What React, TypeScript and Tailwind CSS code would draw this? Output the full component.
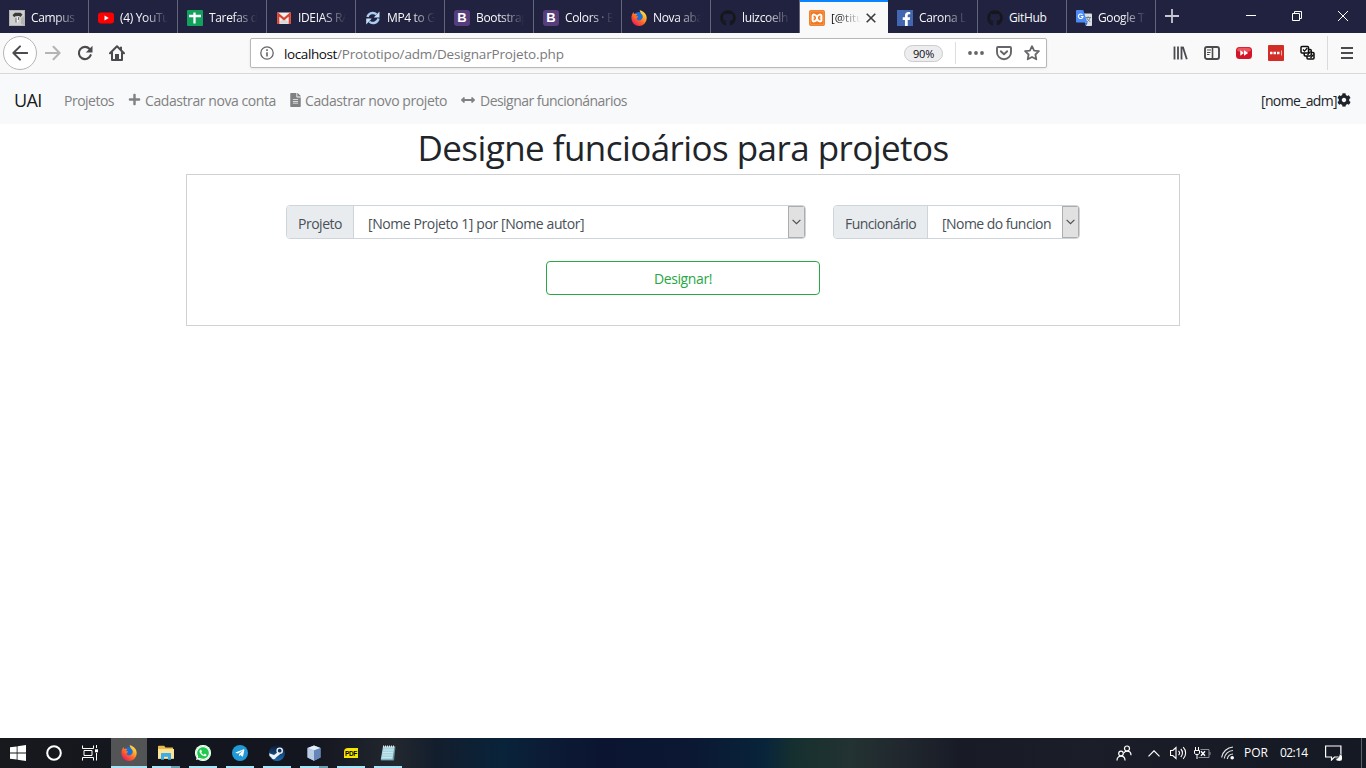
import React from "react";
import { FaPlus, FaFileAlt, FaArrowsAltH, FaCog, FaGithub, FaFacebookF, FaWhatsapp, FaTelegramPlane } from "react-icons/fa";

type Box = { className?: string };

const Firefox = ({ className = "" }: Box) => (
  <svg viewBox="0 0 16 16" className={className}>
    <defs>
      <linearGradient id="ffBody" x1="1" y1="0" x2="0.2" y2="1">
        <stop offset="0" stopColor="#fff36b" />
        <stop offset="0.3" stopColor="#ffbd2f" />
        <stop offset="0.6" stopColor="#ff6a2a" />
        <stop offset="1" stopColor="#e8175d" />
      </linearGradient>
    </defs>
    <circle cx="8" cy="8.2" r="6.2" fill="#1a6fd6" />
    <path d="M8.6.3c3.900.6 7.100 3.800 7.100 7.900A7.600 7.600 0 0 1 8 15.900 7.600 7.600 0 0 1 .4 8.200C.4 5.400 1.300 3.400 2.600 1.900c0 .9.2 1.500.6 2 1-.4 2.200-.3 3.200.4-.9.4-1.300 1-1.200 1.700l1.700.4c.5.2.2.8-.4 1.200-.7.4-.9 1-.6 1.700.6 1.200 2.400 1.400 3.800.6 1.800-1 2.400-2.700 1.800-4.300C11 4 9 3.300 8.600.3z" fill="url(#ffBody)" />
    <path d="M2.600 4.600c.6 0 1.700.4 2.500 1.400l1.700.4-1.300 1.200-.8 1.500C3.300 8.500 2.500 6.600 2.600 4.600z" fill="#ff6b21" />
  </svg>
);

const Campus = () => (
  <svg viewBox="0 0 16 16" className="size-4">
    <rect width="16" height="16" fill="#b4b4b4" />
    <path d="M1 1h14v5l-3 2v6l3 1H1z" fill="#cfcfcf" />
    <path d="M3.500 5 6 2.800h5.500l2 1.700-2 2.500-1.500-1-5 1z" fill="#3a3a3a" />
    <path d="M6 6.500h4.500l-.8 4.500L8.500 13 7 10.500z" fill="#f1f1f1" />
    <path d="M7 7.500v5M9.800 7l-.5 3" stroke="#555" strokeWidth=".9" />
  </svg>
);

const YouTube = () => (
  <svg viewBox="0 0 16 16" className="size-4">
    <rect y="2.500" width="16" height="11" rx="3" fill="#f00" />
    <path d="M6.500 5.500v5L10.800 8z" fill="#fff" />
  </svg>
);

const Sheets = () => (
  <svg viewBox="0 0 16 16" className="size-4">
    <rect width="16" height="16" rx="1" fill="#12a15d" />
    <path d="M2 6h12M7.500 2.500v11" stroke="#fff" strokeWidth="2.300" />
  </svg>
);

const Gmail = () => (
  <svg viewBox="0 0 16 16" className="size-4">
    <rect x="1" y="2.500" width="14" height="11.500" rx="1" fill="#eee" />
    <path d="M2 13.800 7 8.500h2l5 5.300z" fill="#d9d9d9" />
    <path d="M2.200 14V4.200L8 9l5.800-4.800V14" fill="none" stroke="#d8402f" strokeWidth="2.200" />
  </svg>
);

const Convert = () => (
  <svg viewBox="0 0 16 16" className="size-4">
    <path d="M2.500 7a5.500 5.500 0 0 1 9-2.600M13.500 8.500a5.500 5.500 0 0 1-9.200 3" fill="none" stroke="#a9cdf0" strokeWidth="2.400" />
    <path d="M14.500 1.500v6H8.700zM1.200 14.500v-6h5.600z" fill="#c5e0f8" />
  </svg>
);

const Bootstrap = () => (
  <span className="flex size-4 items-center justify-center rounded-[3px] bg-[#563d7c] font-['Liberation_Sans',sans-serif] text-[13px] leading-none font-bold text-white">B</span>
);

const Xampp = () => (
  <svg viewBox="0 0 16 16" className="size-4">
    <rect width="16" height="16" rx="2" fill="#f07a24" />
    <rect x="1.200" y="1.200" width="13.600" height="13.600" rx="1.800" fill="none" stroke="#f6a066" strokeWidth=".7" />
    <path d="M8 7C6.700 4.300 3.600 3.700 3.600 6v4c0 2.300 3.100 1.700 4.400-1 1.300 2.700 4.400 3.300 4.400 1V6C12.400 3.700 9.300 4.300 8 7zM8 6.500v3" fill="none" stroke="#fff" strokeWidth="2" />
    <path d="M3.600 8h1.800M12.400 8h-1.800" stroke="#fff" strokeWidth="1.200" />
  </svg>
);

const Facebook = () => (
  <span className="flex size-4 items-end justify-end bg-[#4267b2] pr-[2px]">
    <FaFacebookF className="h-[14px] w-[9px] text-white" />
  </span>
);

const Translate = () => (
  <svg viewBox="0 0 16 16" className="size-4">
    <path d="M6 3.500h9.200c.5 0 .8.3.8.8v10.900c0 .5-.3.800-.8.800H10z" fill="#dcdfe3" />
    <path d="M9.500 7.500h5.500M12.200 6.300v1.200M14 7.800c-.6 2-2 3.500-3.500 4.300M10.800 8c.8 1.800 2 3 3.500 3.700" stroke="#617b84" strokeWidth=".9" fill="none" />
    <path d="M10 16 8.700 12.500h3z" fill="#3367d6" />
    <path d="M.8 0h6.400l4.200 12.600H.8c-.5 0-.8-.3-.8-.8V.8C0 .3.300 0 .8 0z" fill="#4c8bf5" />
    <path d="M6.500 4.800A2.300 2.300 0 1 0 7 6.500H4.900" stroke="#fff" strokeWidth="1.100" fill="none" />
  </svg>
);

const tabs = [
  { icon: <Campus />, title: "Campus", w: "w-[89px]" },
  { icon: <YouTube />, title: "(4) YouTu", w: "w-[89px]" },
  { icon: <Sheets />, title: "Tarefas d", w: "w-[89px]" },
  { icon: <Gmail />, title: "IDEIAS RA", w: "w-[89px]" },
  { icon: <Convert />, title: "MP4 to G", w: "w-[89px]" },
  { icon: <Bootstrap />, title: "Bootstrap", w: "w-[89px]" },
  { icon: <Bootstrap />, title: "Colors · B", w: "w-[88px]" },
  { icon: <Firefox className="size-4" />, title: "Nova aba", w: "w-[89px]" },
  { icon: <FaGithub className="size-4 text-[#15171c]" />, title: "luizcoelh", w: "w-[89px]" },
  { icon: <Xampp />, title: "[@titu", w: "w-[88px]", active: true },
  { icon: <Facebook />, title: "Carona L", w: "w-[90px]" },
  { icon: <FaGithub className="size-4 text-[#15171c]" />, title: "GitHub", w: "w-[89px]" },
  { icon: <Translate />, title: "Google T", w: "w-[89px]" },
];

function TabStrip() {
  return (
    <div className="flex h-[33px] bg-[#20223f]">
      {tabs.map((t, i) =>
        t.active ? (
          <div key={i} className={`${t.w} flex shrink-0 items-center border-t-2 border-[#0a84ff] bg-[#f9f9fa] pl-[9px] text-[#0c0c0d]`}>
            {t.icon}
            <span className="ml-[6px] w-[30px] overflow-hidden [mask-image:linear-gradient(to_right,black_20%,transparent)] text-[11.5px] leading-4 whitespace-nowrap">{t.title}</span>
            <svg viewBox="0 0 10 10" className="ml-[5px] size-[10px]"><path d="M.7.700l8.600 8.600M9.300.7.700 9.300" stroke="#3c3c3e" strokeWidth="1.600" /></svg>
          </div>
        ) : (
          <div key={i} className={`${t.w} flex shrink-0 items-center border-r border-[#64657a] pt-[2px] pl-[9px] text-[#f9f9fa]`}>
            {t.icon}
            <span className={`ml-[6px] w-[48px] overflow-hidden text-[12px] leading-4 tracking-[-0.35px] whitespace-nowrap ${t.title === "GitHub" ? "" : "[mask-image:linear-gradient(to_right,black_50%,transparent)]"}`}>{t.title}</span>
          </div>
        ),
      )}
      <svg viewBox="0 0 14 14" className="mt-[9px] ml-[9px] size-[14px]"><path d="M7 0v14M0 7h14" stroke="#c8c8d0" strokeWidth="1.800" /></svg>
      <div className="ml-auto flex items-start pt-[11px] pr-[18px] text-white">
        <svg viewBox="0 0 10 10" className="mr-[36px] size-[10px]"><path d="M0 4.500h10" stroke="currentColor" /></svg>
        <svg viewBox="0 0 10 10" className="mr-[36px] size-[10px]"><path d="M.5 2.500h7v7h-7zM2.500 2.500v-2h7v7h-2" stroke="currentColor" fill="none" /></svg>
        <svg viewBox="0 0 10 10" className="size-[10px]"><path d="M0 0l10 10M10 0 0 10" stroke="currentColor" /></svg>
      </div>
    </div>
  );
}

function Toolbar() {
  return (
    <div className="flex h-[41px] items-center border-b border-[#d8d8da] bg-[#f9f9fa] pl-[3px] text-[#4a4a4f]">
      <div className="flex size-[34px] items-center justify-center rounded-full border border-[#b5b5b7] bg-white">
        <svg viewBox="0 0 16 16" className="size-4"><path d="M15.200 8H1.500M8 1.400 1.400 8 8 14.600" fill="none" stroke="currentColor" strokeWidth="2" strokeLinecap="round" strokeLinejoin="round" /></svg>
      </div>
      <svg viewBox="0 0 16 16" className="ml-[8px] size-4 text-[#b4b4b6]"><path d="M.8 8h13.700M8.500 1.800 14.600 8l-6.100 6.200" fill="none" stroke="currentColor" strokeWidth="2" strokeLinecap="round" strokeLinejoin="round" /></svg>
      <svg viewBox="0 0 16 16" className="ml-[16px] size-4"><path d="M13.700 10.200A6.100 6.100 0 1 1 12.600 4" fill="none" stroke="currentColor" strokeWidth="2.100" strokeLinecap="round" /><path d="M15.500.8v6.700H8.800z" fill="currentColor" /></svg>
      <svg viewBox="0 0 16 16" className="ml-[16px] size-4"><path d="M1 8.300 8 1.300l7 7M3 7.500V15h10V7.500M12 2.500v3" fill="none" stroke="currentColor" strokeWidth="2" strokeLinecap="round" strokeLinejoin="round" /><path d="M6 15V9h4v6z" fill="currentColor" /></svg>
      <div className="ml-[125px] flex h-[30px] w-[797px] items-center rounded-[2px] border border-[#b8b8ba] bg-white pl-[9px] shadow-[0_1px_3px_rgba(0,0,0,0.08)]">
        <svg viewBox="0 0 14 14" className="size-[14px]"><circle cx="7" cy="7" r="6.200" fill="none" stroke="#66666a" strokeWidth="1.300" /><path d="M7 6.200v4.300M7 3.300v1.700" stroke="#66666a" strokeWidth="1.600" /></svg>
        <span className="ml-[10px] pt-[2px] text-[13.5px] leading-5 whitespace-pre text-[#7a7a7c]"><span className="tracking-[-0.4px] text-[#0c0c0d]">localhost</span><span className="tracking-[-0.16px]">/Prototipo/adm/DesignarProjeto.php</span></span>
        <span className="ml-auto flex h-[17px] w-[39px] items-center justify-center rounded-full border border-[#ccccce] bg-[#ededf0] pt-px text-[11px] leading-none tracking-[-0.2px] text-[#0c0c0d]">90%</span>
        <span className="ml-[12px] h-[22px] w-px bg-[#dedee0]" />
        <svg viewBox="0 0 16 4" className="ml-[12px] h-1 w-4 text-[#66666a]"><circle cx="2" cy="2" r="1.900" fill="currentColor" /><circle cx="8" cy="2" r="1.900" fill="currentColor" /><circle cx="14" cy="2" r="1.900" fill="currentColor" /></svg>
        <svg viewBox="0 0 16 16" className="ml-[12px] size-4 text-[#66666a]"><path d="M2 2h12c.6 0 1 .4 1 1v4.200a7 7 0 0 1-14 0V3c0-.6.4-1 1-1zM4.800 6.300 8 9.300l3.200-3" fill="none" stroke="currentColor" strokeWidth="1.900" strokeLinecap="round" strokeLinejoin="round" /></svg>
        <svg viewBox="0 0 16 16" className="mr-[6px] ml-[12px] size-4 text-[#66666a]"><path d="m8 1.200 2.100 4.400 4.800.6-3.500 3.300.9 4.800L8 12l-4.300 2.300.9-4.800L1.100 6.200l4.800-.6z" fill="none" stroke="currentColor" strokeWidth="1.800" strokeLinejoin="round" /></svg>
      </div>
      <svg viewBox="0 0 16 16" className="ml-[125px] size-4"><path d="M3 1.500v13M6.500 1.500v13M10 1.500v13M11.300 1.800l4 12.400" transform="translate(-.5 0)" stroke="currentColor" strokeWidth="1.800" /></svg>
      <svg viewBox="0 0 16 16" className="ml-[16px] size-4"><rect x="1" y="2" width="14" height="12" rx="2" fill="none" stroke="currentColor" strokeWidth="1.900" /><path d="M8.500 2v12" stroke="currentColor" strokeWidth="1.600" /><path d="M3 5h4M3 7.500h3.500M3 9.500h2.500" stroke="currentColor" /></svg>
      <svg viewBox="0 0 16 16" className="ml-[16px] size-4"><rect y="2" width="16" height="12" rx="3.500" fill="#d3152a" /><path d="M1 5.500C1 3.500 2.500 2.700 4 2.700h8c1.500 0 3 .8 3 2.800-3 2-11 2-14 0z" fill="#ec5560" /><path d="M4.300 5.300v5.400L8 8v2.700L12.200 8 8 5.300V8z" fill="#fff" /></svg>
      <svg viewBox="0 0 16 16" className="ml-[16px] size-4"><rect width="16" height="16" rx="1" fill="#d32d27" /><path d="M2 8h2.500M5.500 8H8M9 8h2.500" stroke="#fff" strokeWidth="2.300" /><path d="M13.500 5.500v5" stroke="#f3b0ad" /></svg>
      <svg viewBox="0 0 16 16" className="ml-[16px] size-4 text-[#0c0c0d]"><g fill="#fff" stroke="currentColor" strokeWidth="1.500"><rect x="7" y="7.500" width="7" height="6.500" rx="1" /><rect x="4.200" y="4.500" width="7" height="6.500" rx="1" /><rect x="1" y="1.500" width="7.500" height="6.500" rx="1" /></g><path d="m3 4.500 1.500 1.700L7.300 3M7.500 10l3-3.500M10.500 13l3-3.500" fill="none" stroke="currentColor" strokeWidth="1.200" /></svg>
      <span className="ml-[11px] h-[34px] w-px bg-[#dadadc]" />
      <svg viewBox="0 0 12 12" className="ml-[13px] size-[12px]"><path d="M0 1h12M0 6h12M0 11h12" stroke="currentColor" strokeWidth="2" /></svg>
    </div>
  );
}

function NavBar() {
  return (
    <nav className="flex h-[50px] items-center bg-[#f8f9fa] pt-[3px] pr-[15px] pl-[14px] text-[14px] text-[#808182]">
      <span className="w-[50px] text-[18px] tracking-[-0.6px] text-[#191a1b]">UAI</span>
      <span className="w-[64px] tracking-[-0.5px]">Projetos</span>
      <FaPlus className="mr-[4px] size-[13px] -translate-y-px" />
      <span className="w-[145px] tracking-[-0.42px] whitespace-nowrap">Cadastrar nova conta</span>
      <FaFileAlt className="mr-[4px] h-[14px] w-[11px] -translate-y-px" />
      <span className="w-[156px] tracking-[-0.41px] whitespace-nowrap">Cadastrar novo projeto</span>
      <FaArrowsAltH className="mr-[5px] size-[14px] -translate-y-px" />
      <span className="tracking-[-0.53px] whitespace-nowrap">Designar funcionánarios</span>
      <span className="ml-auto tracking-[-0.64px] text-[#212529]">[nome_adm]</span>
      <FaCog className="size-[14px] -translate-y-px text-[#212529]" />
    </nav>
  );
}

function SelectGroup({ label, value, labelClass, valueClass, className }: { label: string; value: string; labelClass: string; valueClass: string; className: string }) {
  return (
    <div className={`flex h-[34px] overflow-hidden rounded-[4px] border border-[#ced4da] text-[14px] text-[#495057] ${className}`}>
      <span className={`flex shrink-0 items-center justify-center border-r border-[#ced4da] bg-[#e9ecef] pt-[2px] ${labelClass}`}>{label}</span>
      <span className={`flex flex-1 items-center pt-[2px] pl-[14px] whitespace-nowrap ${valueClass}`}>{value}</span>
      <span className="flex w-[17px] shrink-0 items-center justify-center border border-[#adadad] bg-[#e1e1e1]">
        <svg viewBox="0 0 9 6" className="h-[6px] w-[9px]"><path d="M.6.800 4.500 4.700 8.400.8" fill="none" stroke="#505050" strokeWidth="1.200" /></svg>
      </span>
    </div>
  );
}

function Page() {
  return (
    <main className="flex flex-1 flex-col items-center bg-white">
      <h1 className="mt-px h-[49px] text-[35px] leading-[46px] tracking-[-0.56px] whitespace-nowrap text-[#212529]">Designe funcioários para projetos</h1>
      <section className="flex h-[152px] w-[994px] flex-col items-center border border-[#d0d1d2] pt-[30px]">
        <div className="flex gap-[27px]">
          <SelectGroup label="Projeto" value="[Nome Projeto 1] por [Nome autor]" className="w-[520px]" labelClass="w-[67px] tracking-[-0.49px]" valueClass="tracking-[-0.41px]" />
          <SelectGroup label="Funcionário" value="[Nome do funcion" className="w-[247px]" labelClass="w-[94px] tracking-[-0.55px]" valueClass="tracking-[-0.55px]" />
        </div>
        <button className="mt-[22px] h-[34px] w-[274px] rounded-[4px] border border-[#28a745] pt-px text-[14px] leading-none tracking-[-0.4px] text-[#28a745]">Designar!</button>
      </section>
    </main>
  );
}

const Explorer = () => (
  <svg viewBox="0 0 16 16" className="size-4">
    <path d="M0 1.500c0-.5.300-.8.800-.8h5.400l1.300 1.800H15v11H0z" fill="#e9b94a" />
    <path d="M0 4h16v9.800H0z" fill="#ffe394" />
    <path d="M3 14.700V9c0-.6.400-1 1-1h8c.6 0 1 .4 1 1v5.700h-3v-3H6v3z" fill="#3badea" />
  </svg>
);

const Round = ({ color, children }: { color: string; children: React.ReactNode }) => (
  <span className={`flex size-4 items-center justify-center rounded-full text-white ${color}`}>{children}</span>
);

const Steam = () => (
  <svg viewBox="0 0 16 16" className="size-4">
    <defs><linearGradient id="steamBg" x1="0" y1="0" x2="0" y2="1"><stop offset="0" stopColor="#0c1730" /><stop offset="1" stopColor="#1d6db0" /></linearGradient></defs>
    <circle cx="8" cy="8" r="8" fill="url(#steamBg)" />
    <circle cx="10.700" cy="5.700" r="2.600" fill="none" stroke="#eef3f8" strokeWidth="1.400" />
    <path d="M.2 8.200 5 10l4-3 2 2.300-4 3.200a2.400 2.400 0 0 1-4.600 0L.5 11z" fill="#eef3f8" />
  </svg>
);

const Cube = () => (
  <svg viewBox="0 0 16 16" className="size-4">
    <path d="M8 .5 14.500 3v9.500L8 15.800 1.500 12.500V3z" fill="#86a5ce" />
    <path d="M8 .5 14.500 3 8 5.500 1.500 3z" fill="#e3eef8" />
    <path d="M1.500 3 8 5.500v10.300l-6.500-3.300z" fill="#b9cde5" />
    <path d="M8 5.500 14.500 3v9.500L8 15.800z" fill="#6686b8" />
  </svg>
);

const Pdf = () => (
  <span className="flex h-[10px] w-[14px] items-center justify-center rounded-tl-[4px] bg-[#f6e600] pt-[2px] font-['Liberation_Sans',sans-serif] text-[6.500px] leading-none font-bold tracking-[-0.3px] text-black">PDF</span>
);

const Notes = () => (
  <svg viewBox="0 0 16 16" className="size-4">
    <path d="M3.500 1.500h12L14 15.500H1z" fill="#5f8d9c" />
    <path d="M3 1.500h11.500L12.500 14.500H.8z" fill="#a8d4e0" />
    <path d="M3.500 5h10M3 7.500h10M2.700 10h10M2.300 12.500h10" stroke="#d0edf3" strokeWidth=".8" />
    <path d="M3.500.5v2M5.500.5v2M7.500.5v2M9.500.5v2M11.500.5v2M13.500.5v2" stroke="#e8e8e8" />
  </svg>
);

const apps = [
  { icon: <Firefox className="size-4" />, active: true, stacked: false },
  { icon: <Explorer />, active: false, stacked: true },
  { icon: <Round color="bg-[#1fc94d] ring-1 ring-inset ring-white"><FaWhatsapp className="size-4" /></Round>, active: false, stacked: false },
  { icon: <Round color="bg-[#2199d6]"><FaTelegramPlane className="size-[10px]" /></Round>, active: false, stacked: false },
  { icon: <Steam />, active: false, stacked: false },
  { icon: <Cube />, active: false, stacked: true },
  { icon: <Pdf />, active: false, stacked: false },
  { icon: <Notes />, active: false, stacked: false },
];

function Taskbar() {
  return (
    <footer className="flex h-[30px] items-center bg-[linear-gradient(90deg,#17191d_0px,#13151f_200px,#13151f_310px,#22272e_395px,#131e2d_435px,#08233a_505px,#0c1b36_545px,#0b1532_600px,#0b1733_690px,#08243a_765px,#16302f_795px,#233232_850px,#20272e_905px,#181b26_960px,#1b1d28_1090px,#141923_1366px)] text-white">
      <div className="flex w-[111px] shrink-0 items-center pl-[10px]">
        <svg viewBox="0 0 16 16" className="size-4"><path d="M0 2.300 6.700 1.400v6.200H0zM7.500 1.300 16 0v7.600H7.500zM0 8.400h6.700v6.200L0 13.700zM7.500 8.400H16V16l-8.500-1.200z" fill="#fff" /></svg>
        <svg viewBox="0 0 16 16" className="ml-[20px] size-4"><circle cx="8" cy="8" r="6.800" fill="none" stroke="#fff" strokeWidth="2" /></svg>
        <svg viewBox="0 0 16 16" className="ml-[20px] size-4"><path d="M.5.5v3h11v-3M.5 15.500v-3h11v3M2 5.500h8v5H2zM14.500 0v3M14.500 8v7.500" fill="none" stroke="#fff" /><rect x="13" y="4.300" width="3" height="3" fill="#fff" /></svg>
      </div>
      {apps.map((a, i) => (
        <div key={i} className={`mr-px flex h-[30px] w-[36px] shrink-0 flex-col items-center justify-between ${a.active ? "bg-[#535456]" : ""}`}>
          <span className="flex h-[28px] items-center pt-[2px]">{a.icon}</span>
          <span className={`flex h-[2px] justify-end bg-[#a5e5f7] ${a.active ? "w-[36px]" : "w-[28px]"}`}>{a.stacked && <span className="h-[2px] w-[9px] bg-[#6d9fae]" />}</span>
        </div>
      ))}
      <div className="ml-auto flex items-center pr-[4px]">
        <svg viewBox="0 0 16 16" className="size-4"><circle cx="5" cy="8.500" r="2.300" fill="none" stroke="#fff" strokeWidth="1.200" /><path d="M1 15.500c0-3 2-4.300 4-4.300s4 1.300 4 4.300" fill="none" stroke="#fff" strokeWidth="1.200" /><circle cx="11" cy="3.500" r="2.500" fill="none" stroke="#fff" strokeWidth="1.200" /><path d="M8 8c.6-1.300 2-1.800 3-1.800 2.200 0 4 1.500 4 4" fill="none" stroke="#fff" strokeWidth="1.200" /></svg>
        <svg viewBox="0 0 12 7" className="ml-[16px] h-[7px] w-[12px]"><path d="M.5 6.300 6 .8l5.500 5.500" fill="none" stroke="#fff" strokeWidth="1.200" /></svg>
        <svg viewBox="0 0 17 14" className="ml-[10px] h-[14px] w-[17px]"><path d="M.5 4.500h2.300L6 1.500v11L2.800 9.500H.5zM8.500 4.800c1.200 1.200 1.200 3.200 0 4.400M10.800 3c2.200 2.200 2.200 5.800 0 8M13.200 1.200c3.200 3.200 3.200 8.400 0 11.600" fill="none" stroke="#fff" strokeWidth="1.100" /></svg>
        <svg viewBox="0 0 17 14" className="ml-[7px] h-[14px] w-[17px]"><path d="M1.500 1v3M4.500 1v3M.5 4.500h5V7c0 1-1 1.500-2.500 1.500S.5 8 .5 7zM3 8.500V13" fill="none" stroke="#fff" /><path d="M6.500 3.500h8.500v8H4.500" fill="none" stroke="#8b8e95" /><path d="M16 6v3" stroke="#8b8e95" /><path d="m7 5.300 4 4.400M11 5.300l-4 4.400" stroke="#fff" strokeWidth="1.400" /></svg>
        <svg viewBox="0 0 14 14" className="ml-[10px] size-[14px]"><path d="M.6 11.500A12.500 12.500 0 0 1 12 1M3.300 12.500A9 9 0 0 1 12 4.500M6.300 13A6 6 0 0 1 12 8" fill="none" stroke="#e4e5e8" strokeWidth="1.200" /><circle cx="11.200" cy="11.800" r="1.800" fill="#fff" /></svg>
        <span className="ml-[9px] w-[36px] text-[12px] leading-none">POR</span>
        <span className="w-[45px] text-[12px] leading-none tracking-[-0.65px]">02:14</span>
        <svg viewBox="0 0 17 16" className="h-4 w-[17px]"><path d="M.6 1h15.300v11H9.500L6.500 15v-3H.6z" fill="none" stroke="#fff" strokeWidth="1.200" /><path d="M14.500 9a3.700 3.700 0 1 1-4 4.500c2.200.4 4-1.800 4-4.500z" fill="#fff" stroke="#171922" strokeWidth=".6" /></svg>
        <span className="ml-[19px] h-[30px] w-px bg-[#5d6067]" />
      </div>
    </footer>
  );
}

export default function App() {
  return (
    <div className="flex h-[768px] w-[1366px] flex-col overflow-hidden bg-white font-['Open_Sans','Noto_Sans',sans-serif]">
      <TabStrip />
      <Toolbar />
      <NavBar />
      <Page />
      <Taskbar />
    </div>
  );
}
